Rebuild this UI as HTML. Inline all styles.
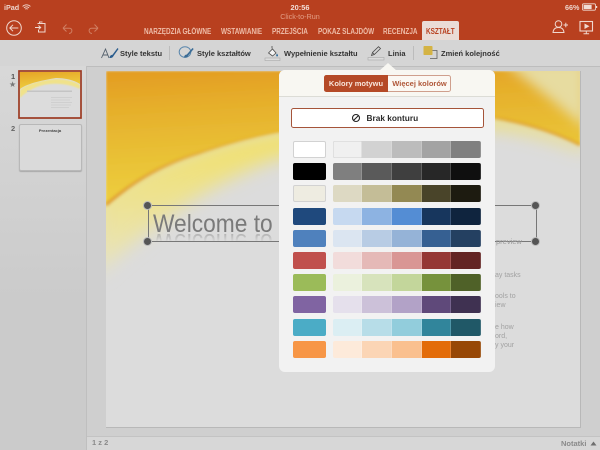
<!DOCTYPE html>
<html><head><meta charset="utf-8"><style>
html,body{margin:0;padding:0}
body{width:600px;height:450px;overflow:hidden;position:relative;background:#cfcfcf;font-family:"Liberation Sans",sans-serif}
.a{position:absolute;white-space:nowrap}
#wrap{position:absolute;left:0;top:0;width:600px;height:450px;overflow:hidden;filter:blur(.3px)}
.tab{position:absolute;top:27px;font-size:8px;font-weight:bold;color:#eebca8;white-space:nowrap;transform:scaleX(.8);transform-origin:0 0}
.tb{position:absolute;top:48.500px;font-size:7.500px;font-weight:bold;color:#333;white-space:nowrap}
.sw{position:absolute;height:17px;border-radius:2px;box-sizing:border-box}
.s{position:absolute;height:17px;width:29.700px;box-shadow:inset -.5px 0 0 rgba(255,255,255,.3)}
.g{position:absolute;font-size:7px;color:#a2a2a2;white-space:nowrap}
.h{position:absolute;width:7px;height:7px;border-radius:50%;background:#555;box-shadow:0 0 0 1px #bbb}
</style></head><body><div id="wrap">

<!-- header -->
<div class="a" style="left:0;top:0;width:600px;height:40px;background:#b8401f"></div>
<div class="a" style="left:4px;top:3px;font-size:7.200px;font-weight:bold;color:#eed5cc">iPad</div>
<svg class="a" style="left:22px;top:4px" width="9" height="7" viewBox="0 0 9 7"><path d="M.6 2.400a5.500 5.500 0 0 1 7.800 0M2 3.900a3.500 3.500 0 0 1 5 0M3.300 5.200a1.700 1.700 0 0 1 2.400 0" fill="none" stroke="#eed5cc" stroke-width=".9"/></svg>
<div class="a" style="left:0;width:600px;top:3px;text-align:center;font-size:7.400px;font-weight:bold;color:#f3dfd8">20:56</div>
<div class="a" style="left:0;width:600px;top:12px;text-align:center;font-size:7.200px;color:#e39f87">Click-to-Run</div>
<div class="a" style="left:565px;top:3px;font-size:7.200px;font-weight:bold;color:#eed5cc">66%</div>
<svg class="a" style="left:582px;top:3px" width="16" height="8" viewBox="0 0 16 8"><rect x=".5" y=".8" width="13" height="6.400" rx="1.200" fill="none" stroke="#f0dcd4" stroke-width=".8"/><rect x="1.600" y="1.900" width="8" height="4.200" fill="#f0dcd4"/><rect x="14" y="3" width="1.200" height="2" fill="#f0dcd4"/></svg>

<!-- left icons -->
<svg class="a" style="left:0;top:15px" width="110" height="26" viewBox="0 0 110 26">
<g fill="none" stroke="#f0d8cf" stroke-width="1">
<circle cx="14" cy="13" r="7.300"/><path d="M18.300 13H10M13 9.800 9.800 13l3.200 3.200"/>
<path d="M37.500 8.500H45V17H38.500V15M35 12.500H40.500M38.500 10.500 40.700 12.500 38.500 14.500M39.500 8.500V7H42.500"/>
</g>
<g fill="none" stroke="#d07f63" stroke-width="1"><path d="M63 13.200 66.500 9.500M63 13.200l3.500 3.300M63.500 13.200H69.500C73 13.200 72.500 18.500 69 18.500"/><path d="M98 13.200 94.500 9.500M98 13.200 94.500 16.500M97.500 13.200H91.500C88 13.200 88.500 18.500 92 18.500"/></g>
</svg>

<!-- tabs -->
<div class="tab" style="left:144px">NARZĘDZIA GŁÓWNE</div>
<div class="tab" style="left:221px">WSTAWIANIE</div>
<div class="tab" style="left:272px">PRZEJŚCIA</div>
<div class="tab" style="left:318px">POKAZ SLAJDÓW</div>
<div class="tab" style="left:383px">RECENZJA</div>
<div class="a" style="left:422px;top:21px;width:37px;height:19px;background:#eadcd6;border-radius:2px 2px 0 0"></div>
<div class="tab" style="left:426px;color:#b8401f">KSZTAŁT</div>

<!-- right icons -->
<svg class="a" style="left:550px;top:18px" width="48" height="18" viewBox="0 0 48 18">
<g fill="none" stroke="#f0d8cf" stroke-width="1"><circle cx="8.500" cy="6" r="3.300"/><path d="M3 14.500c.3-3.500 2.500-5 5.500-5s5.200 1.500 5.500 5zM13.500 7H18M15.800 4.800v4.400"/></g>
<rect x="30" y="3.500" width="12.500" height="9.500" fill="none" stroke="#f0d8cf" stroke-width="1.100"/><path d="M34.500 5.500 39.500 8.200 34.500 11z" fill="#f0d8cf"/><path d="M36.300 13v2.500M33.500 15.700h5.600" stroke="#f0d8cf" stroke-width="1"/>
</svg>

<!-- toolbar -->
<div class="a" style="left:0;top:40px;width:600px;height:26px;background:#d5d5d5;border-bottom:1px solid #bdbdbd"></div>
<svg class="a" style="left:100px;top:44px" width="20" height="17" viewBox="0 0 20 17"><path d="M1.500 14 5.500 5 9 14M3 11H8" fill="none" stroke="#54606c" stroke-width=".9"/><path d="M9.500 14c.4-2.500 1.500-3 3-3.200L17.500 4l1 1-5 7c-.6 1.500-2 2.300-4 2z" fill="#2a5d8e"/></svg>
<div class="tb" style="left:120px">Style tekstu</div>
<div class="a" style="left:169px;top:46px;width:1px;height:14px;background:#bcbcbc"></div>
<svg class="a" style="left:178px;top:45px" width="17" height="16" viewBox="0 0 17 16"><ellipse cx="7" cy="7" rx="5.800" ry="5.300" fill="none" stroke="#5b87ad" stroke-width="1"/><path d="M6 12.500c.4-2.300 1.300-2.800 2.800-3L14.500 3l1.200 1-5.500 6.500c-.4 1.700-2 2.400-4.200 2z" fill="#3a6b95"/></svg>
<div class="tb" style="left:197px">Style kształtów</div>
<svg class="a" style="left:264px;top:44px" width="18" height="18" viewBox="0 0 18 18"><rect x="1" y="14" width="15" height="2.500" fill="#dcdcdc" stroke="#a8a8a8" stroke-width=".6"/><path d="M4.500 9 8.500 5 12 9 8.500 12z" fill="#f4f4f4" stroke="#4c4c4c" stroke-width=".8"/><path d="M8 4.500V2" stroke="#4c4c4c" stroke-width=".8"/><path d="M13 9.500c1 1.500 1.200 2 .8 2.700-.5.300-1 .3-1.400 0C12 11.500 12.200 10.700 13 9.500z" fill="#2a6b9c"/></svg>
<div class="tb" style="left:284px">Wypełnienie kształtu</div>
<svg class="a" style="left:367px;top:44px" width="18" height="18" viewBox="0 0 18 18"><rect x="1" y="13.500" width="16" height="2.500" fill="#dcdcdc" stroke="#a8a8a8" stroke-width=".6"/><path d="M4.500 11.500 5.500 8.500 11.500 2.700 13.500 4.500 7.300 10.500zM5.500 8.500l1.800 2" fill="none" stroke="#4c4c4c" stroke-width=".8"/></svg>
<div class="tb" style="left:388px">Linia</div>
<div class="a" style="left:413px;top:46px;width:1px;height:14px;background:#bcbcbc"></div>
<svg class="a" style="left:422px;top:45px" width="17" height="15" viewBox="0 0 17 15"><path d="M8 5.500h7v8H8" fill="none" stroke="#5e5e5e" stroke-width=".8"/><rect x="1.500" y="1" width="9" height="9" rx=".8" fill="#d4b344"/></svg>
<div class="tb" style="left:441px">Zmień kolejność</div>

<!-- left panel -->
<div class="a" style="left:0;top:66px;width:86px;height:384px;background:linear-gradient(#d8d8d8,#cbcbcb 60%);border-right:1px solid #bfbfbf"></div>
<div class="a" style="left:11px;top:72px;font-size:7.500px;font-weight:bold;color:#555">1</div>
<div class="a" style="left:9px;top:80px;font-size:8px;color:#777">★</div>
<div class="a" style="left:11px;top:124px;font-size:7.500px;font-weight:bold;color:#666">2</div>

<!-- thumb 1 -->
<svg class="a" style="left:18px;top:70px" width="64" height="49" viewBox="0 0 64 49">
<defs>
<linearGradient id="tg" x1="0" y1="0" x2=".3" y2="1"><stop offset="0" stop-color="#e6a426"/><stop offset="1" stop-color="#eed040"/></linearGradient>
<filter id="tb"><feGaussianBlur stdDeviation=".8"/></filter>
</defs>
<rect x="1" y="1" width="62" height="47" fill="#dcdcdc"/>
<path d="M2 20C10 13 26 10 38 9C47 9 56 11 62 15V19C54 15 42 13 32 14C20 15 10 20 2 28z" fill="#f0e28a" filter="url(#tb)"/>
<path d="M2 19C10 13 26 10 38 8C47 8 56 10 62 14V2H2z" fill="url(#tg)"/>
<rect x="9" y="20.500" width="45" height="1.500" fill="#c4c4c4"/>
<g fill="#cfcfcf"><rect x="33" y="27" width="21" height="1"/><rect x="33" y="29.500" width="19" height="1"/><rect x="33" y="32" width="21" height="1"/><rect x="33" y="34.500" width="20" height="1"/><rect x="33" y="37" width="18" height="1"/></g>
<rect x="1" y="1" width="62" height="47" fill="none" stroke="#9c3a22" stroke-width="1.700"/>
</svg>
<!-- thumb 2 -->
<div class="a" style="left:19px;top:123.500px;width:61px;height:45px;background:#dadada;border:.5px solid #b8b8b8;border-radius:2px;box-shadow:0 1px 1px rgba(0,0,0,.2)"></div>
<div class="a" style="left:19px;width:62px;top:128px;text-align:center;font-size:4px;font-weight:bold;color:#444">Prezentacja</div>

<!-- status bar -->
<div class="a" style="left:87px;top:436px;width:513px;height:14px;background:#d7d7d7;border-top:1px solid #c3c3c3;box-sizing:border-box"></div>
<div class="a" style="left:92px;top:438px;font-size:7.500px;font-weight:bold;color:#8a8a8a">1 z 2</div>
<div class="a" style="left:561px;top:439px;font-size:7.500px;font-weight:bold;color:#8a8a8a">Notatki</div>
<svg class="a" style="left:590px;top:441px" width="7" height="5"><path d="M.5 4.500 3.500.5 6.500 4.500z" fill="#6f6f6f"/></svg>

<!-- slide -->
<svg class="a" style="left:106px;top:71px" width="475" height="357" viewBox="0 0 475 357">
<defs>
<linearGradient id="y1" x1="0" y1="0" x2=".2" y2="1"><stop offset="0" stop-color="#e39c22"/><stop offset=".3" stop-color="#e6b02c"/><stop offset=".65" stop-color="#e9c236"/><stop offset="1" stop-color="#efd040"/></linearGradient>
<linearGradient id="gw" x1="0" y1="0" x2="0" y2="1"><stop offset="0" stop-color="#f3e05e"/><stop offset="1" stop-color="#e8e4c0"/></linearGradient>
<linearGradient id="ed" x1="0" y1="0" x2="1" y2="0"><stop offset="0" stop-color="#dc8e26"/><stop offset=".35" stop-color="#e6b030" stop-opacity=".5"/><stop offset=".7" stop-color="#e8c23a" stop-opacity=".2"/><stop offset=".85" stop-color="#e0a02a" stop-opacity=".9"/><stop offset="1" stop-color="#e0a02a"/></linearGradient>
<filter id="b1" x="-20%" y="-40%" width="140%" height="180%"><feGaussianBlur stdDeviation="9"/></filter>
<filter id="b2" x="-5%" y="-20%" width="110%" height="140%"><feGaussianBlur stdDeviation="1.500"/></filter>
<filter id="b3"><feGaussianBlur stdDeviation="6"/></filter>
<filter id="b4"><feGaussianBlur stdDeviation="1"/></filter>
<clipPath id="sl"><rect x="0" y="0" width="474" height="356"/></clipPath>
</defs>
<rect x="0" y="0" width="474" height="356" fill="#dcdcdc"/>
<g clip-path="url(#sl)">
<path d="M-10 125C30 100 60 88 94 78C150 60 250 44 389 44C425 50 455 60 480 72V80C455 70 425 60 389 56C300 54 220 70 160 92C90 120 40 160 -10 205z" fill="url(#gw)" filter="url(#b1)"/>
<path d="M0 134C30 108 60 92 94 82C120 73 150 65 174 61C250 46 330 38 389 47C425 53 455 64 474 74V0H0z" fill="url(#y1)" filter="url(#b4)"/>
<path d="M395 -10H480V58C450 32 425 12 395 -10z" fill="#e7dca0" filter="url(#b3)"/>
<path d="M0 134C30 108 60 92 94 82C120 73 150 65 174 61C250 46 330 38 389 47C425 53 455 64 474 74" fill="none" stroke="url(#ed)" stroke-width="2.500" filter="url(#b2)"/>
</g>
<path d="M474.500 0V356.500H0" fill="none" stroke="#b8b8b8" stroke-width="1"/>
</svg>

<!-- title box -->
<div class="a" style="left:148px;top:205px;width:389px;height:37px;box-sizing:border-box;border:1px solid #777"></div>
<div class="a" style="left:153px;top:210px;font-size:25px;color:#7a7a7a;transform:scaleX(.91);transform-origin:0 0">Welcome to</div>
<div class="a" style="left:153px;top:233px;height:9px;overflow:hidden;width:125px;opacity:.55;-webkit-mask-image:linear-gradient(#000,transparent);mask-image:linear-gradient(#000,transparent)"><div style="font-size:25px;line-height:29px;color:#888;margin-top:-23px;transform:scale(.91,-1);transform-origin:0 23px">Welcome to</div></div>
<div class="h" style="left:144px;top:202px"></div>
<div class="h" style="left:144px;top:238px"></div>
<div class="h" style="left:532px;top:202px"></div>
<div class="h" style="left:532px;top:238px"></div>
<div class="g" style="left:496px;top:237px;font-size:7.500px;color:#9a9a9a">preview</div>
<div class="g" style="left:495px;top:272px">ay tasks</div>
<div class="g" style="left:495px;top:293px">ools to</div>
<div class="g" style="left:495px;top:302px">iew</div>
<div class="g" style="left:495px;top:324px">e how</div>
<div class="g" style="left:495px;top:333px">ord,</div>
<div class="g" style="left:495px;top:342px">y your</div>

<!-- popover -->
<svg class="a" style="left:379px;top:63px" width="18" height="8"><path d="M0 8 9 0 18 8z" fill="#f8f7f2"/></svg>
<div class="a" style="left:279px;top:70px;width:216px;height:302px;background:#f2f2f2;border-radius:6px"></div>
<div class="a" style="left:279px;top:70px;width:216px;height:26px;background:#f8f7f2;border-radius:6px 6px 0 0;border-bottom:1px solid #dcdcd6"></div>
<div class="a" style="left:324px;top:75px;width:127px;height:17px;box-sizing:border-box;border:1px solid #cf9f8d;border-radius:2.500px;background:#fbf8f3"></div>
<div class="a" style="left:324px;top:75px;width:64px;height:17px;background:#b54a27;border-radius:2.500px 0 0 2.500px;color:#f8e6dc;font-size:7.500px;font-weight:bold;text-align:center;line-height:17px">Kolory motywu</div>
<div class="a" style="left:388px;top:75px;width:63px;height:17px;color:#b0583a;font-size:7.500px;font-weight:bold;text-align:center;line-height:17px">Więcej kolorów</div>
<div class="a" style="left:291px;top:108px;width:193px;height:20px;box-sizing:border-box;background:#fff;border:1.500px solid #a5543a;border-radius:2.500px"></div>
<svg class="a" style="left:351px;top:113px" width="10" height="10" viewBox="0 0 10 10"><circle cx="5" cy="5" r="3.500" fill="none" stroke="#222" stroke-width="1.100"/><path d="M2.500 7.500 7.500 2.500" stroke="#222" stroke-width="1.100"/></svg>
<div class="a" style="left:366.500px;top:113px;font-size:8.300px;font-weight:bold;color:#2a2a2a">Brak konturu</div>

<!-- swatches -->
<div id="sw">
<div class="sw" style="left:292.500px;top:141px;width:33px;background:#fff;border:.5px solid #d2d2d2"></div>
<div class="s" style="left:332.500px;top:141px;background:#f0f0f0;border-radius:2px 0 0 2px;box-shadow:inset 0 0 0 .5px #cfcfcf"></div><div class="s" style="left:362.200px;top:141px;background:#d2d2d2"></div><div class="s" style="left:391.900px;top:141px;background:#bcbcbc"></div><div class="s" style="left:421.600px;top:141px;background:#a3a3a3"></div><div class="s" style="left:451.300px;top:141px;background:#808080;border-radius:0 2px 2px 0"></div>

<div class="sw" style="left:292.500px;top:163.200px;width:33px;background:#000"></div>
<div class="s" style="left:332.500px;top:163.200px;background:#7f7f7f;border-radius:2px 0 0 2px"></div><div class="s" style="left:362.200px;top:163.200px;background:#5a5a5a"></div><div class="s" style="left:391.900px;top:163.200px;background:#3f3f3f"></div><div class="s" style="left:421.600px;top:163.200px;background:#272727"></div><div class="s" style="left:451.300px;top:163.200px;background:#0f0f0f;border-radius:0 2px 2px 0"></div>

<div class="sw" style="left:292.500px;top:185.400px;width:33px;background:#eeece1;border:.5px solid #d2d2d2"></div>
<div class="s" style="left:332.500px;top:185.400px;background:#ddd9c3;border-radius:2px 0 0 2px"></div><div class="s" style="left:362.200px;top:185.400px;background:#c4bd97"></div><div class="s" style="left:391.900px;top:185.400px;background:#938953"></div><div class="s" style="left:421.600px;top:185.400px;background:#494429"></div><div class="s" style="left:451.300px;top:185.400px;background:#1d1b10;border-radius:0 2px 2px 0"></div>

<div class="sw" style="left:292.500px;top:207.600px;width:33px;background:#1f497d"></div>
<div class="s" style="left:332.500px;top:207.600px;background:#c6d9f0;border-radius:2px 0 0 2px"></div><div class="s" style="left:362.200px;top:207.600px;background:#8db3e2"></div><div class="s" style="left:391.900px;top:207.600px;background:#548dd4"></div><div class="s" style="left:421.600px;top:207.600px;background:#17365d"></div><div class="s" style="left:451.300px;top:207.600px;background:#0f243e;border-radius:0 2px 2px 0"></div>

<div class="sw" style="left:292.500px;top:229.800px;width:33px;background:#4f81bd"></div>
<div class="s" style="left:332.500px;top:229.800px;background:#dbe5f1;border-radius:2px 0 0 2px"></div><div class="s" style="left:362.200px;top:229.800px;background:#b8cce4"></div><div class="s" style="left:391.900px;top:229.800px;background:#95b3d7"></div><div class="s" style="left:421.600px;top:229.800px;background:#366092"></div><div class="s" style="left:451.300px;top:229.800px;background:#244061;border-radius:0 2px 2px 0"></div>

<div class="sw" style="left:292.500px;top:252px;width:33px;background:#c0504d"></div>
<div class="s" style="left:332.500px;top:252px;background:#f2dcdb;border-radius:2px 0 0 2px"></div><div class="s" style="left:362.200px;top:252px;background:#e5b9b7"></div><div class="s" style="left:391.900px;top:252px;background:#d99694"></div><div class="s" style="left:421.600px;top:252px;background:#953734"></div><div class="s" style="left:451.300px;top:252px;background:#632423;border-radius:0 2px 2px 0"></div>

<div class="sw" style="left:292.500px;top:274.200px;width:33px;background:#9bbb59"></div>
<div class="s" style="left:332.500px;top:274.200px;background:#ebf1dd;border-radius:2px 0 0 2px"></div><div class="s" style="left:362.200px;top:274.200px;background:#d7e3bc"></div><div class="s" style="left:391.900px;top:274.200px;background:#c3d69b"></div><div class="s" style="left:421.600px;top:274.200px;background:#76923c"></div><div class="s" style="left:451.300px;top:274.200px;background:#4f6128;border-radius:0 2px 2px 0"></div>

<div class="sw" style="left:292.500px;top:296.400px;width:33px;background:#8064a2"></div>
<div class="s" style="left:332.500px;top:296.400px;background:#e5e0ec;border-radius:2px 0 0 2px"></div><div class="s" style="left:362.200px;top:296.400px;background:#ccc1d9"></div><div class="s" style="left:391.900px;top:296.400px;background:#b2a2c7"></div><div class="s" style="left:421.600px;top:296.400px;background:#5f497a"></div><div class="s" style="left:451.300px;top:296.400px;background:#3f3151;border-radius:0 2px 2px 0"></div>

<div class="sw" style="left:292.500px;top:318.600px;width:33px;background:#4bacc6"></div>
<div class="s" style="left:332.500px;top:318.600px;background:#dbeef3;border-radius:2px 0 0 2px"></div><div class="s" style="left:362.200px;top:318.600px;background:#b7dde8"></div><div class="s" style="left:391.900px;top:318.600px;background:#92cddc"></div><div class="s" style="left:421.600px;top:318.600px;background:#31859b"></div><div class="s" style="left:451.300px;top:318.600px;background:#205867;border-radius:0 2px 2px 0"></div>

<div class="sw" style="left:292.500px;top:340.800px;width:33px;background:#f79646"></div>
<div class="s" style="left:332.500px;top:340.800px;background:#fdeada;border-radius:2px 0 0 2px"></div><div class="s" style="left:362.200px;top:340.800px;background:#fbd5b5"></div><div class="s" style="left:391.900px;top:340.800px;background:#fac08f"></div><div class="s" style="left:421.600px;top:340.800px;background:#e36c09"></div><div class="s" style="left:451.300px;top:340.800px;background:#974806;border-radius:0 2px 2px 0"></div>
</div>

</div></body></html>
